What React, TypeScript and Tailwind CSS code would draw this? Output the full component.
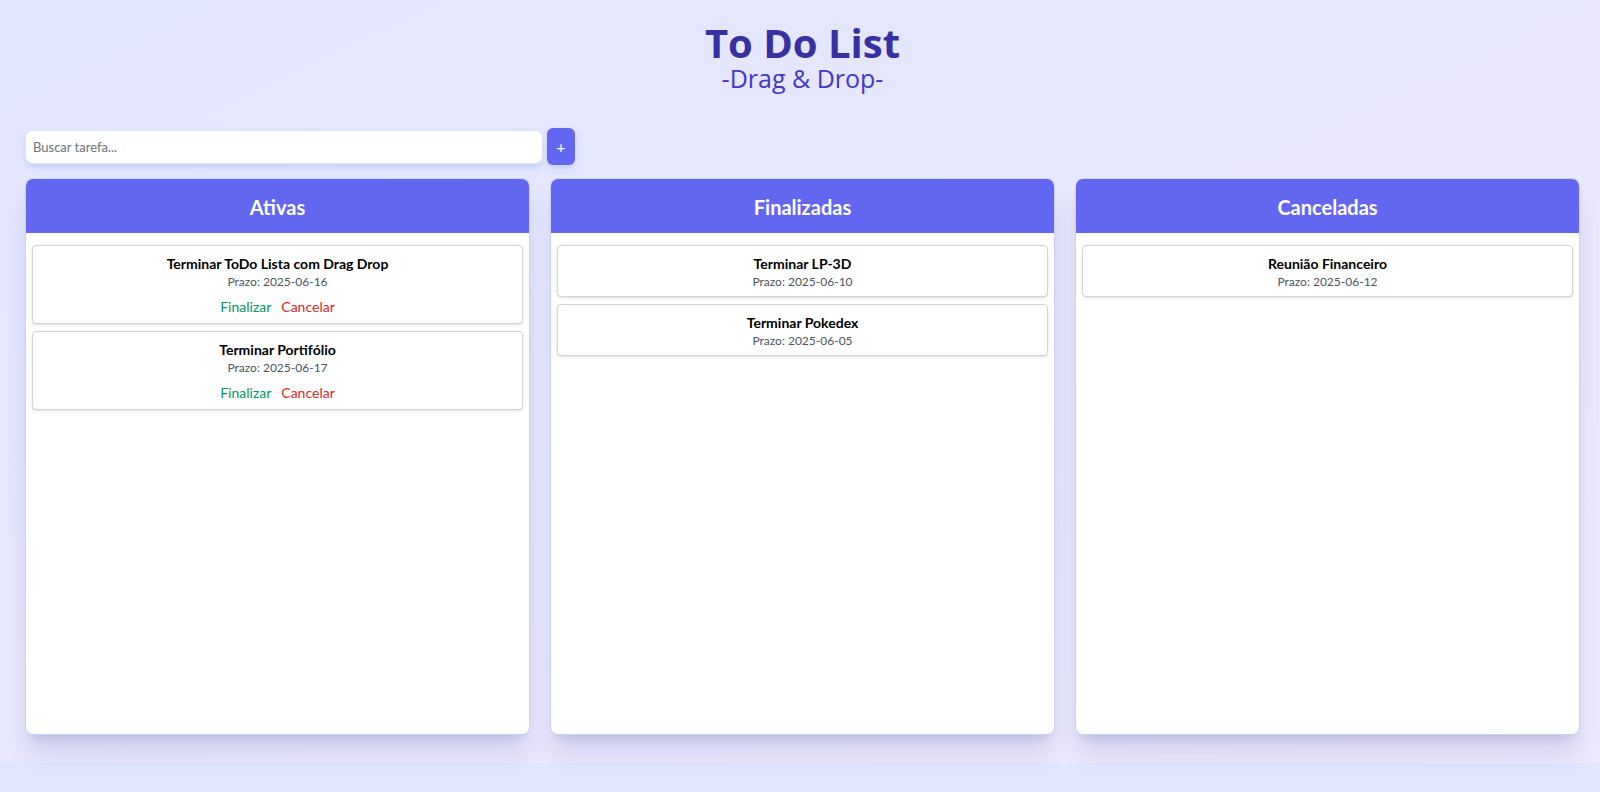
import { useState } from "react";

type Status = "ativas" | "finalizadas" | "canceladas";

type Task = {
  id: number;
  title: string;
  due: string;
  status: Status;
};

const initialTasks: Task[] = [
  { id: 1, title: "Terminar ToDo Lista com Drag Drop", due: "2025-06-16", status: "ativas" },
  { id: 2, title: "Terminar Portifólio", due: "2025-06-17", status: "ativas" },
  { id: 3, title: "Terminar LP-3D", due: "2025-06-10", status: "finalizadas" },
  { id: 4, title: "Terminar Pokedex", due: "2025-06-05", status: "finalizadas" },
  { id: 5, title: "Reunião Financeiro", due: "2025-06-12", status: "canceladas" },
];

const columns: { key: Status; label: string }[] = [
  { key: "ativas", label: "Ativas" },
  { key: "finalizadas", label: "Finalizadas" },
  { key: "canceladas", label: "Canceladas" },
];

function TaskCard({
  task,
  onMove,
}: {
  task: Task;
  onMove: (id: number, status: Status) => void;
}) {
  return (
    <div className="bg-white border border-[#d4d4d8] rounded shadow-sm px-2 pt-[7px] pb-[6px] text-center">
      <h3 className="text-sm font-bold text-black leading-[21px]">{task.title}</h3>
      <p className="text-xs text-[#4b5563] leading-4">Prazo: {task.due}</p>
      {task.status === "ativas" && (
        <div className="flex justify-center gap-2.5 mt-[6px]">
          <button
            onClick={() => onMove(task.id, "finalizadas")}
            className="text-sm leading-[21px] text-[#059669] hover:underline"
          >
            Finalizar
          </button>
          <button
            onClick={() => onMove(task.id, "canceladas")}
            className="text-sm leading-[21px] text-[#dc2626] hover:underline"
          >
            Cancelar
          </button>
        </div>
      )}
    </div>
  );
}

export default function App() {
  const [tasks, setTasks] = useState<Task[]>(initialTasks);
  const [search, setSearch] = useState("");

  const moveTask = (id: number, status: Status) => {
    setTasks((prev) => prev.map((t) => (t.id === id ? { ...t, status } : t)));
  };

  const addTask = () => {
    const title = search.trim();
    if (!title) return;
    setTasks((prev) => [
      ...prev,
      { id: Date.now(), title, due: new Date().toISOString().slice(0, 10), status: "ativas" },
    ]);
    setSearch("");
  };

  const visible = tasks.filter((t) =>
    t.title.toLowerCase().includes(search.toLowerCase())
  );

  return (
    <div className="bg-[#e0e6fe] min-h-screen font-['Lato',sans-serif]">
      <div className="bg-gradient-to-br from-[#e2e6fd] to-[#ede8fd] pl-[25px] pr-[20px] pt-[22px] pb-[28px]">
        <header className="text-center font-['Open_Sans',sans-serif]">
          <h1 className="text-[40px] leading-[42px] font-bold text-[#3730a3]">To Do List</h1>
          <p className="text-[25px] leading-7 text-[#4338ca]">-Drag &amp; Drop-</p>
        </header>

        <div className="flex items-center gap-1 mt-[36px]">
          <input
            value={search}
            onChange={(e) => setSearch(e.target.value)}
            placeholder="Buscar tarefa..."
            className="w-[518px] h-[34px] rounded-lg border border-[#e0e7ff] bg-white px-[7px] text-[13px] text-gray-800 placeholder:text-[#6b7280] shadow-md shadow-indigo-200 outline-none"
          />
          <button
            onClick={addTask}
            className="w-[28px] h-[37px] rounded-md bg-[#6366f1] text-white text-base shadow-md shadow-indigo-200"
          >
            +
          </button>
        </div>

        <div className="grid grid-cols-3 gap-[20px] mt-[13px]">
          {columns.map((col) => (
            <section
              key={col.key}
              className="h-[557px] bg-white rounded-lg border border-[#c7d2fe] shadow-xl shadow-indigo-900/15 overflow-hidden flex flex-col"
            >
              <div className="h-[54px] bg-[#6366f1] flex items-center justify-center pt-px">
                <h2 className="text-xl font-bold text-white">{col.label}</h2>
              </div>
              <div className="flex flex-col gap-[7px] px-1.5 pt-[12px]">
                {visible
                  .filter((t) => t.status === col.key)
                  .map((t) => (
                    <TaskCard key={t.id} task={t} onMove={moveTask} />
                  ))}
              </div>
            </section>
          ))}
        </div>
      </div>
    </div>
  );
}
